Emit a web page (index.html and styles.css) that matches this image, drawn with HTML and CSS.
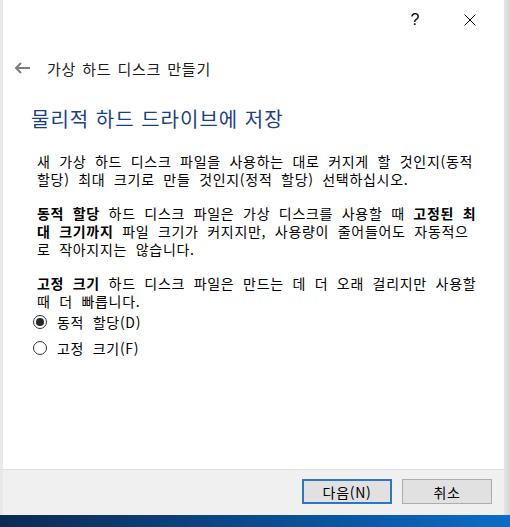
FILE: index.html
```html
<!DOCTYPE html>
<html lang="ko">
<head>
  <meta charset="UTF-8" />
  <title>가상 하드 디스크 만들기</title>
  <link rel="stylesheet" href="styles.css">
</head>
<body>
  <div class="screen">
    <div class="window">
      <div class="titlebar">
        <span class="cap-btn help">?</span>
        <span class="cap-btn close">
          <svg width="12" height="12" viewBox="0 0 12 12"><path d="M0.5 0.5 L11.5 11.5 M11.5 0.5 L0.5 11.5" stroke="#000" stroke-width="1" fill="none"/></svg>
        </span>
      </div>

      <div class="nav">
        <svg class="back" width="16" height="12" viewBox="0 0 16 12"><path d="M16 6 H2 M7 1 L2 6 L7 11" stroke="#7d7d7d" stroke-width="2" fill="none"/></svg>
        <span class="nav-title">가상 하드 디스크 만들기</span>
      </div>

      <div class="content">
        <h1 class="heading">물리적 하드 드라이브에 저장</h1>

        <p class="text">새 가상 하드 디스크 파일을 사용하는 대로 커지게 할 것인지(동적<br>할당) 최대 크기로 만들 것인지(정적 할당) 선택하십시오.</p>

        <p class="text"><b>동적 할당</b> 하드 디스크 파일은 가상 디스크를 사용할 때 <b>고정된 최<br>대 크기까지</b> 파일 크기가 커지지만, 사용량이 줄어들어도 자동적으<br>로 작아지지는 않습니다.</p>

        <p class="text"><b>고정 크기</b> 하드 디스크 파일은 만드는 데 더 오래 걸리지만 사용할<br>때 더 빠릅니다.</p>

        <div class="options">
          <div class="option"><span class="radio checked"></span>동적 할당(D)</div>
          <div class="option"><span class="radio"></span>고정 크기(F)</div>
        </div>
      </div>

      <div class="footer">
        <button class="btn btn-default">다음(N)</button>
        <button class="btn">취소</button>
      </div>
    </div>
    <div class="taskbar"></div>
  </div>
</body>
</html>
```

FILE: styles.css
```css
* {
  box-sizing: border-box;
  margin: 0;
  padding: 0;
}

body {
  width: 510px;
  height: 527px;
  overflow: hidden;
  background: #e2e2e2;
  font-family: "Noto Sans CJK KR", "Noto Sans", sans-serif;
  color: #000;
}

.screen {
  display: flex;
  flex-direction: column;
  height: 527px;
  background: linear-gradient(to right, #e9e9e9 0, #e9e9e9 504px, #e4e4e4 504px, #d6d6d6 510px);
}

.window {
  margin-left: 3px;
  width: 501px;
  height: 515px;
  background: #fff;
  display: flex;
  flex-direction: column;
}

.titlebar {
  height: 40px;
  display: flex;
  justify-content: flex-end;
  align-items: center;
  padding-right: 22px;
}

.cap-btn {
  width: 24px;
  height: 24px;
  display: flex;
  align-items: center;
  justify-content: center;
}

.help {
  font-family: "Liberation Sans", sans-serif;
  font-size: 16px;
  margin-right: 31px;
}

.nav {
  height: 56px;
  display: flex;
  align-items: center;
  padding-left: 11px;
}

.back {
  margin-right: 17px;
}

.nav-title {
  font-size: 15px;
  letter-spacing: 0.8px;
  word-spacing: 1px;
  color: #1a1a1a;
}

.content {
  flex: 1;
  padding-left: 28px;
}

.heading {
  font-size: 20px;
  font-weight: 400;
  line-height: 26px;
  letter-spacing: 1px;
  margin-top: 10px;
  margin-bottom: 20px;
  color: #1b3f86;
}

.text {
  font-size: 14px;
  line-height: 18px;
  letter-spacing: 0.7px;
  word-spacing: 4px;
  white-space: nowrap;
  padding-left: 6px;
  margin-bottom: 16px;
}

.text b {
  font-weight: 700;
}

.options {
  margin-top: -17px;
  padding-left: 2px;
}

.option {
  height: 26px;
  display: flex;
  align-items: center;
  font-size: 14px;
  letter-spacing: 0.7px;
  word-spacing: 4px;
}

.radio {
  width: 14px;
  height: 14px;
  border: 1px solid #333;
  border-radius: 50%;
  margin-right: 10px;
  display: flex;
  align-items: center;
  justify-content: center;
}

.radio.checked::after {
  content: "";
  width: 8px;
  height: 8px;
  border-radius: 50%;
  background: #262626;
}

.footer {
  height: 46px;
  background: #f0f0f0;
  border-top: 1px solid #dfdfdf;
  display: flex;
  justify-content: flex-end;
  align-items: flex-start;
  gap: 10px;
  padding: 9px 12px 0 0;
}

.btn {
  width: 90px;
  height: 25px;
  background: #e1e1e1;
  border: 1px solid #adadad;
  font-family: "Noto Sans CJK KR", sans-serif;
  font-size: 14px;
  letter-spacing: 0.7px;
  word-spacing: 4px;
  color: #000;
}

.btn-default {
  border: 2px solid #2a78c5;
}

.taskbar {
  height: 12px;
  background: linear-gradient(to right, #0b2a52, #0b4a8e 50%, #0b6cc6);
}
```
